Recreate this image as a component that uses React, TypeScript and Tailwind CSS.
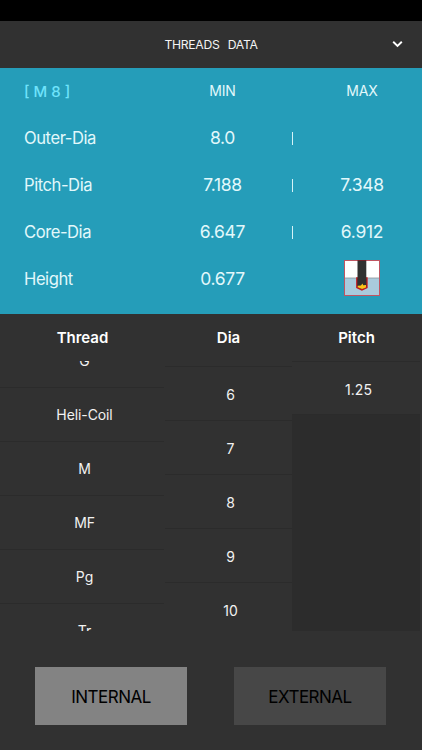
import { ReactNode } from "react";

const rows = [
  { label: "Outer-Dia", min: "8.0", max: "", divider: true },
  { label: "Pitch-Dia", min: "7.188", max: "7.348", divider: true },
  { label: "Core-Dia", min: "6.647", max: "6.912", divider: true },
];

const threads = ["G", "Heli-Coil", "M", "MF", "Pg", "Tr"];
const diameters = ["6", "7", "8", "9", "10"];
const pitches = ["1.25"];

function ThreadIcon() {
  return (
    <svg className="-mt-[2px]" width="36" height="36" viewBox="0 0 36 36">
      <rect width="36" height="36" fill="#fff" />
      <rect y="18" width="36" height="18" fill="#a9cbdd" />
      <path d="M0 18h36" stroke="#8c9299" strokeWidth="0.8" />
      <path d="M12.9 18v9.6l5 2.3 5-2.3V18z" fill="#303030" stroke="#c4161c" strokeWidth="1.5" />
      <rect x="13.5" width="8.8" height="26" fill="#303030" />
      <path d="M13.7 25.8l3.2-.2 1.6-2 .7 1.7 2.8-.3v2.4l-3.9 1.7-4.4-1.8z" fill="#fcc419" />
      <rect x="0.5" y="0.5" width="35" height="35" fill="none" stroke="#c05562" />
      <path d="M13.5 0.5h8.8" stroke="#6b2026" />
    </svg>
  );
}

function DataRow({ label, min, divider, children }: { label: string; min: string; divider?: boolean; children?: ReactNode }) {
  return (
    <div className="grid h-[47px] grid-cols-[167px_112px_27px_112px] items-center text-center text-[17.5px] tracking-[-0.3px]">
      <div className="pl-6 text-left text-[16.6px] tracking-[-0.45px]">{label}</div>
      <div className="pr-px">{min}</div>
      <div>{divider && <span className="mx-auto block h-[13px] w-px bg-[#d5f3f7]" />}</div>
      <div className="flex justify-center">{children}</div>
    </div>
  );
}

function Picker({ items, className }: { items: string[]; className: string }) {
  return (
    <div className={`flex h-[270px] flex-col overflow-hidden text-center text-[14px] text-[#f2f2f2] ${className}`}>
      {items.map((item) => (
        <div key={item} className="flex h-[54px] shrink-0 items-center justify-center border-b border-[#2b2b2b] bg-[#313131]">
          {item}
        </div>
      ))}
    </div>
  );
}

export default function App() {
  return (
    <div className="h-[750px] w-[422px] overflow-hidden bg-[#313131] font-['Inter','Liberation_Sans',sans-serif] text-white">
      <div className="h-[21px] bg-black" />

      <header className="relative flex h-[46.5px] items-center justify-center text-[12.2px] text-[#f4f4f4]">
        <h1 className="pt-[2px] tracking-[-0.3px] whitespace-pre [word-spacing:1px]">THREADS  DATA</h1>
        <svg className="absolute top-[19px] right-[19px]" width="11" height="8" viewBox="0 0 11 8" fill="none">
          <path d="M1.2 1.7l4.3 4.2 4.3-4.2" stroke="#fff" strokeWidth="1.9" />
        </svg>
      </header>

      <section className="h-[246.5px] bg-[#259db9] text-[#e2f8fb]">
        <div className="grid h-[47px] grid-cols-[167px_112px_27px_112px] items-center text-center text-[14px] tracking-[-0.2px]">
          <div className="pt-[2px] pl-6 text-left text-[15px] font-medium tracking-normal text-[#6fe3fb]">[ M 8 ]</div>
          <div className="pr-px pb-px">MIN</div>
          <div />
          <div className="pb-px">MAX</div>
        </div>
        {rows.map((row) => (
          <DataRow key={row.label} label={row.label} min={row.min} divider={row.divider}>
            {row.max}
          </DataRow>
        ))}
        <DataRow label="Height" min="0.677">
          <ThreadIcon />
        </DataRow>
      </section>

      <section>
        <div className="grid h-[47px] grid-cols-[165px_127px_130px] items-center pt-[2px] text-center text-[15px] font-semibold">
          <div>Thread</div>
          <div>Dia</div>
          <div className="pr-px">Pitch</div>
        </div>
        <div className="grid grid-cols-[165px_127px_130px]">
          <Picker items={threads} className="mr-px tracking-[-0.1px] [&>div]:pl-[5px] [&>div:first-child]:-mt-[27px]" />
          <Picker items={diameters} className="pt-[5px] [&>div]:pt-[2px] [&>div]:pl-1 [&>div:first-child]:h-[55px] [&>div:first-child]:border-t" />
          <Picker items={pitches} className="mr-[2px] bg-[#2c2c2c] [&>div]:border-t [&>div]:pt-[2px] [&>div]:pl-[5px]" />
        </div>
      </section>

      <div className="flex justify-between px-[35px] pt-9 text-[17px] tracking-[-0.5px] text-black">
        <button className="h-[58px] w-[152px] bg-[#838383] pt-[3px]">INTERNAL</button>
        <button className="mr-px h-[58px] w-[152px] bg-[#474747] pt-[3px]">EXTERNAL</button>
      </div>
    </div>
  );
}
